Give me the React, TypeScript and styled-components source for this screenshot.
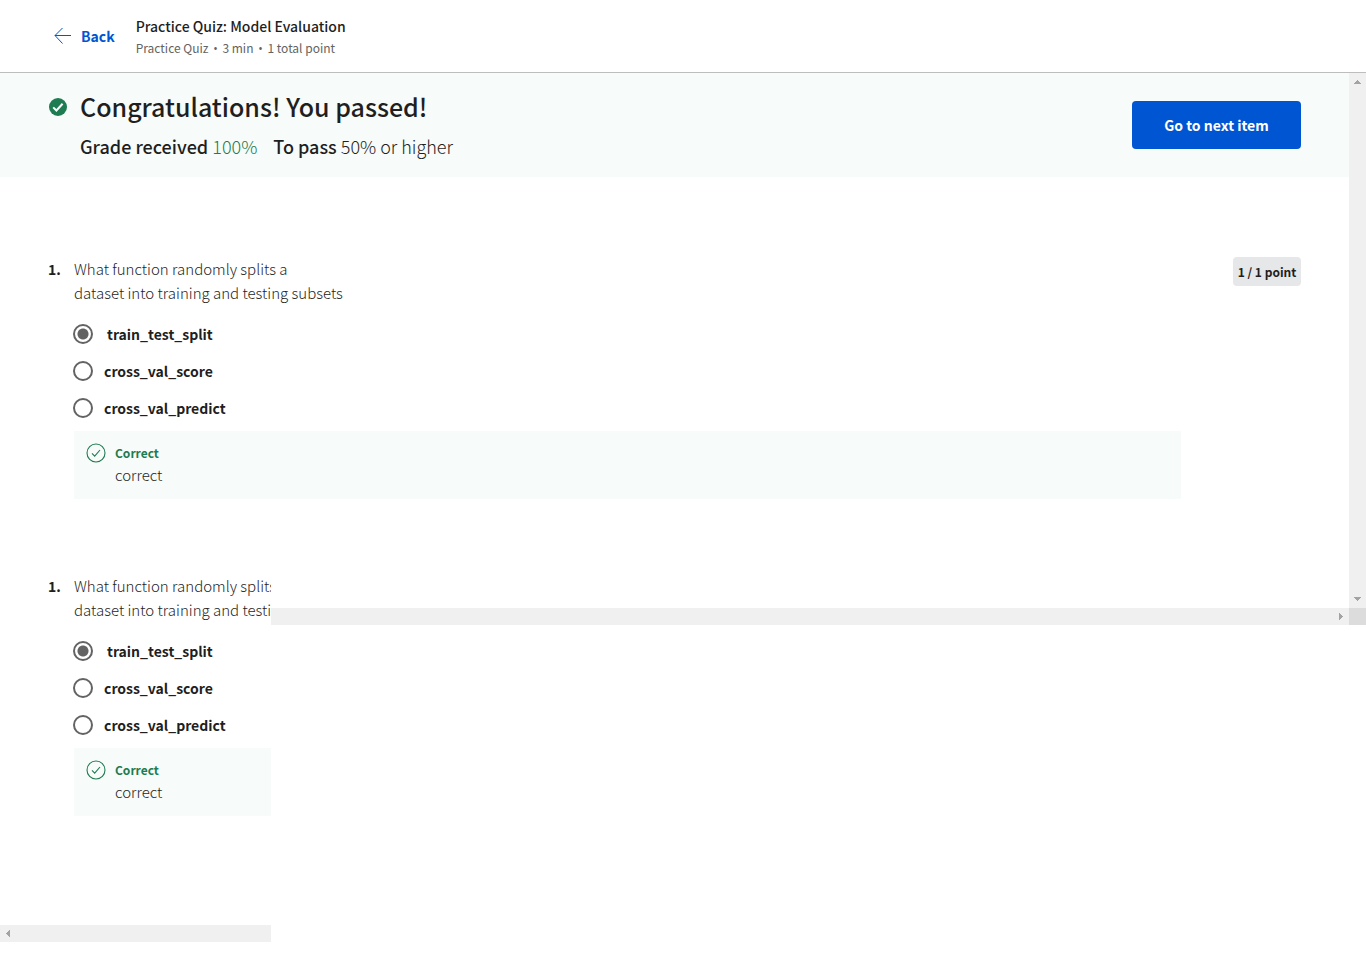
import React from "react";
import styled, { createGlobalStyle } from "styled-components";

const GlobalStyle = createGlobalStyle`
  *, *::before, *::after { box-sizing: border-box; }
  body {
    margin: 0;
    background: #fff;
    color: #1f1f1f;
    font-family: "Noto Sans CJK SC", "Open Sans", sans-serif;
    font-size: 14px;
    line-height: 24px;
  }
  h1, h2, p { margin: 0; }
`;

const Header = styled.header`
  display: flex;
  align-items: center;
  gap: 21px;
  height: 73px;
  padding: 0 54px;
  border-bottom: 1px solid #bdbdbd;
`;

const BackLink = styled.a`
  display: flex;
  align-items: center;
  gap: 9px;
  color: #0056d2;
  font-weight: 700;
  text-decoration: none;
`;

const QuizInfo = styled.div`
  padding-top: 2px;
`;

const QuizTitle = styled.h2`
  font-size: 14px;
  font-weight: 500;
  line-height: 22px;
`;

const QuizMeta = styled.p`
  color: #636363;
  font-size: 12px;
  line-height: 22px;
`;

const Dot = styled.span`
  margin: 0 2px;
  font-family: "Open Sans", sans-serif;
`;

const Workspace = styled.main`
  display: grid;
  grid-template-columns: 271px minmax(0, 1fr) 17px;
  grid-template-rows: auto 34px 17px auto 17px;
`;

const Overview = styled.div`
  grid-area: 1 / 1 / 2 / 3;
`;

const ClippedPane = styled.div`
  grid-area: 2 / 1 / 5 / 2;
  overflow: hidden;
  padding-bottom: 109px;
  white-space: nowrap;
`;

const Track = styled.div<{ $vertical?: boolean; $area: string; $align?: string }>`
  grid-area: ${(p) => p.$area};
  display: flex;
  flex-direction: ${(p) => (p.$vertical ? "column" : "row")};
  justify-content: ${(p) => p.$align ?? "space-between"};
  background: #f0f0f0;
`;

const Corner = styled.div`
  grid-area: 3 / 3 / 4 / 4;
  background: #dcdcdc;
`;

const Banner = styled.section`
  display: flex;
  align-items: flex-start;
  gap: 12px;
  height: 104px;
  padding: 15px 48px;
  background: #f7fbf9;
`;

const BannerIcon = styled.div`
  display: flex;
  padding-top: 9px;
`;

const BannerText = styled.div`
  flex: 1;
`;

const BannerTitle = styled.h1`
  font-size: 25px;
  font-weight: 500;
  line-height: 36px;
`;

const Grades = styled.div`
  display: flex;
  gap: 16px;
  padding-top: 10px;
  font-size: 18px;
  line-height: 24px;
`;

const Grade = styled.p<{ $passed?: boolean }>`
  font-weight: 500;
  span {
    color: ${(p) => (p.$passed ? "#1d7c50" : "#1f1f1f")};
    font-weight: 300;
  }
`;

const NextButton = styled.button`
  min-width: 169px;
  height: 48px;
  margin-top: 13px;
  padding: 0 31px;
  border: 0;
  border-radius: 4px;
  background: #0056d2;
  color: #fff;
  font: inherit;
  font-weight: 700;
`;

const QuestionRow = styled.section<{ $spaced?: boolean }>`
  display: flex;
  align-items: flex-start;
  padding: ${(p) => (p.$spaced ? "80px 48px 75px" : "0 0 0 48px")};
`;

const Number = styled.span`
  flex: 0 0 26px;
  font-weight: 700;
`;

const QuestionBody = styled.div<{ $wide?: boolean }>`
  flex: 1;
  margin-right: ${(p) => (p.$wide ? "52px" : "0")};
`;

const Prompt = styled.p`
  color: #1f1f1f;
  font-size: 15px;
  font-weight: 300;
`;

const Options = styled.fieldset`
  display: grid;
  gap: 13px;
  margin: 0;
  padding: 17px 0 11px;
  border: 0;
`;

const Option = styled.label<{ $chosen?: boolean }>`
  display: flex;
  align-items: center;
  gap: ${(p) => (p.$chosen ? "14px" : "11px")};
  margin-left: -1px;
  font-weight: 700;
`;

const Radio = styled.input`
  appearance: none;
  width: 20px;
  height: 20px;
  margin: 0;
  border: 2px solid #636363;
  border-radius: 50%;
  &:checked {
    background: radial-gradient(circle, #636363 5px, transparent 6px);
  }
`;

const Feedback = styled.div`
  display: flex;
  align-items: flex-start;
  gap: 9px;
  height: 68px;
  padding: 12px;
  background: #f7fbf9;
`;

const FeedbackTitle = styled.p`
  color: #1d7c50;
  font-size: 12px;
  font-weight: 700;
  line-height: 20px;
`;

const FeedbackText = styled.p`
  color: #1f1f1f;
  font-size: 15px;
  font-weight: 300;
`;

const Points = styled.div`
  min-width: 68px;
  height: 29px;
  padding: 0 4px;
  border-radius: 4px;
  background: #e5e7e8;
  font-size: 12px;
  font-weight: 700;
  line-height: 30px;
  text-align: center;
`;

const arrows = {
  up: "M8 7h1v1h1v1h1v1h1v1H5v-1h1V9h1V8h1z",
  down: "M5 6h7v1h-1v1h-1v1H9v1H8V9H7V8H6V7H5z",
  right: "M7 5h1v1h1v1h1v1h1v1h-1v1H9v1H8v1H7z",
  left: "M10 5v7H9v-1H8v-1H7V9H6V8h1V7h1V6h1V5z",
};

const Arrow = ({ dir }: { dir: keyof typeof arrows }) => (
  <svg width="17" height="17" viewBox="0 0 17 17" fill="#a3a3a3" shapeRendering="crispEdges" aria-hidden="true">
    <path d={arrows[dir]} />
  </svg>
);

const CheckOutline = () => (
  <svg width="20" height="20" viewBox="0 0 20 20" fill="none" stroke="#1d7c50" aria-hidden="true">
    <circle cx="10" cy="10" r="9" strokeWidth="1.1" />
    <path d="M6 10.3l2.7 2.8L14 7" strokeWidth="1.1" />
  </svg>
);

const choices = ["train_test_split", "cross_val_score", "cross_val_predict"];

function Question({ id, points }: { id: string; points?: string }) {
  return (
    <QuestionRow $spaced={!!points}>
      <Number>1.</Number>
      <QuestionBody $wide={!!points}>
        <Prompt>
          What function randomly splits a<br />
          dataset into training and testing subsets
        </Prompt>
        <Options aria-label="Answer">
          {choices.map((choice, i) => (
            <Option key={choice} $chosen={i === 0}>
              <Radio type="radio" name={id} defaultChecked={i === 0} />
              {choice}
            </Option>
          ))}
        </Options>
        <Feedback>
          <CheckOutline />
          <div>
            <FeedbackTitle>Correct</FeedbackTitle>
            <FeedbackText>correct</FeedbackText>
          </div>
        </Feedback>
      </QuestionBody>
      {points && <Points>{points}</Points>}
    </QuestionRow>
  );
}

export default function App() {
  return (
    <>
      <GlobalStyle />
      <Header>
        <BackLink href="#">
          <svg width="18" height="18" viewBox="0 0 18 18" fill="none" stroke="#0056d2" aria-hidden="true">
            <path d="M17 8.5H1M8.5 1L1 8.5 8.5 16.5" strokeWidth="1" />
          </svg>
          Back
        </BackLink>
        <QuizInfo>
          <QuizTitle>Practice Quiz: Model Evaluation</QuizTitle>
          <QuizMeta>
            Practice Quiz <Dot>•</Dot> 3 min <Dot>•</Dot> 1 total point
          </QuizMeta>
        </QuizInfo>
      </Header>
      <Workspace>
        <Overview>
          <Banner>
            <BannerIcon>
              <svg width="20" height="20" viewBox="0 0 20 20" fill="none" aria-hidden="true">
                <circle cx="10" cy="10" r="9" fill="#1d7c50" />
                <path d="M5.2 10.4l3.2 3.1 6.2-6.7" stroke="#fff" strokeWidth="2" />
              </svg>
            </BannerIcon>
            <BannerText>
              <BannerTitle>Congratulations! You passed!</BannerTitle>
              <Grades>
                <Grade $passed>
                  Grade received <span>100%</span>
                </Grade>
                <Grade>
                  To pass <span>50% or higher</span>
                </Grade>
              </Grades>
            </BannerText>
            <NextButton type="button">Go to next item</NextButton>
          </Banner>
          <Question id="first" points="1 / 1 point" />
        </Overview>
        <ClippedPane>
          <Question id="second" />
        </ClippedPane>
        <Track $vertical $area="1 / 3 / 3 / 4">
          <Arrow dir="up" />
          <Arrow dir="down" />
        </Track>
        <Track $area="3 / 2 / 4 / 3" $align="flex-end">
          <Arrow dir="right" />
        </Track>
        <Corner />
        <Track $area="5 / 1 / 6 / 2">
          <Arrow dir="left" />
        </Track>
      </Workspace>
    </>
  );
}
